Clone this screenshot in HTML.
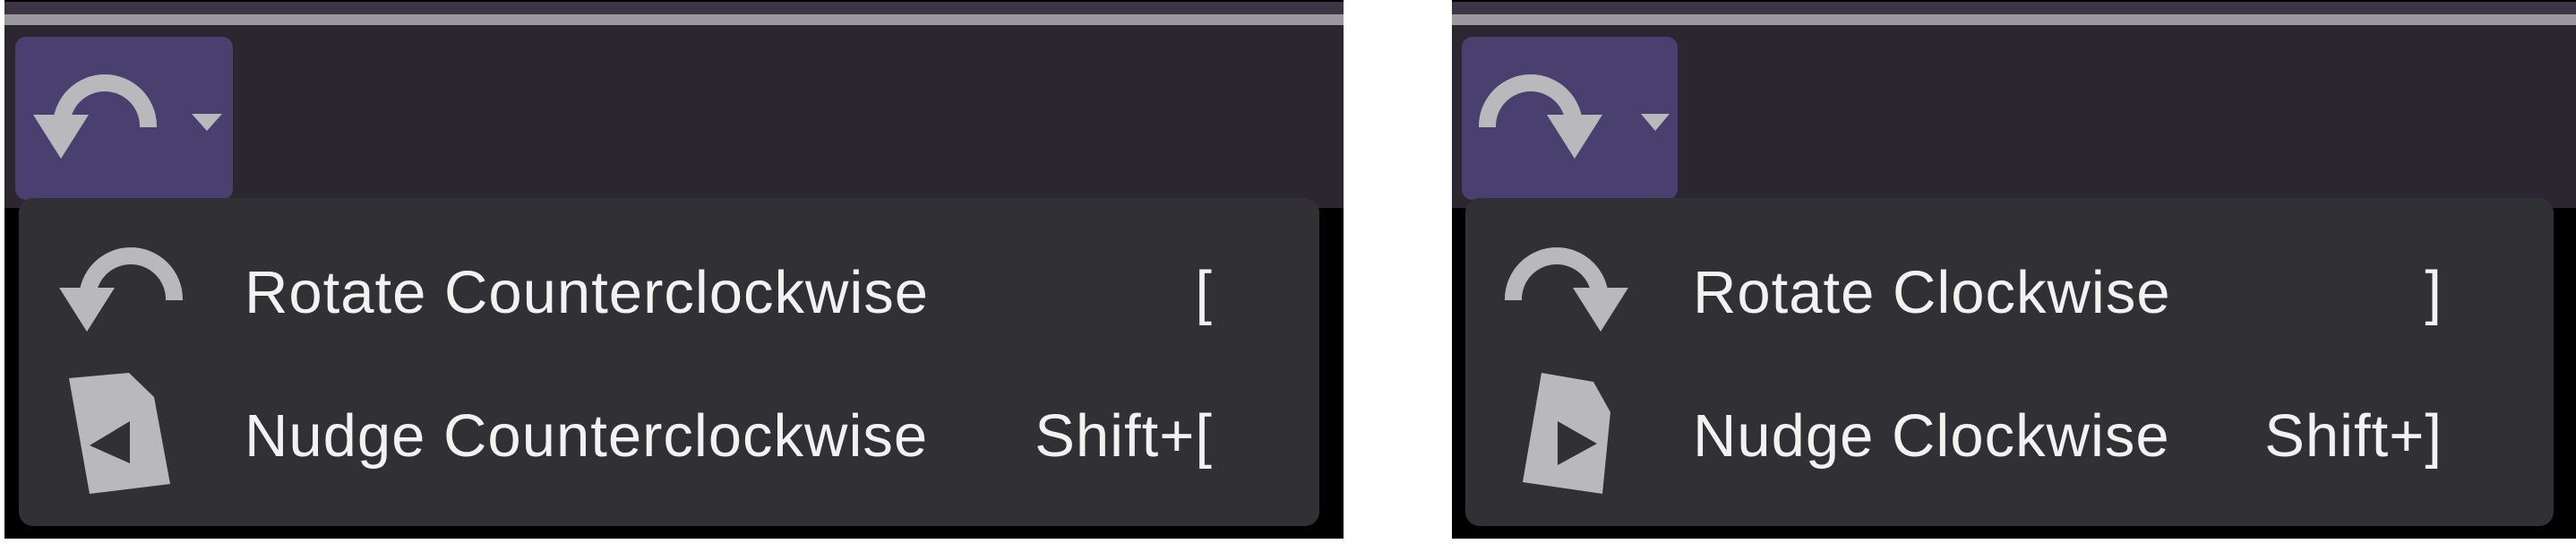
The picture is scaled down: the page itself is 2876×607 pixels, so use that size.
<!DOCTYPE html>
<html><head><meta charset="utf-8"><style>
*{margin:0;padding:0;box-sizing:border-box}
body{width:2876px;height:607px;background:#fff;position:relative;overflow:hidden;font-family:"Liberation Sans",sans-serif}
.abs{position:absolute}
.t{position:absolute;color:#f2f2f2;font-size:67px;line-height:67px;white-space:nowrap;letter-spacing:1px}
</style></head><body>
<!-- left panel -->
<div class="abs" style="left:5px;top:0;width:1495px;height:601px;background:#000"></div>
<div class="abs" style="left:5px;top:2px;width:1495px;height:14px;background:#3d3444"></div>
<div class="abs" style="left:5px;top:16px;width:1495px;height:12px;background:#9a9a9e"></div>
<div class="abs" style="left:5px;top:28px;width:1495px;height:204px;background:#2b2630"></div>
<div class="abs" style="left:17px;top:41px;width:243px;height:182px;background:#4a4070;border-radius:12px"></div>
<div class="abs" style="left:21px;top:221px;width:1452px;height:366px;background:#303035;border-radius:16px"></div>

<!-- right panel -->
<div class="abs" style="left:1621px;top:0;width:1255px;height:601px;background:#000"></div>
<div class="abs" style="left:1621px;top:2px;width:1255px;height:14px;background:#3d3444"></div>
<div class="abs" style="left:1621px;top:16px;width:1255px;height:12px;background:#9a9a9e"></div>
<div class="abs" style="left:1621px;top:28px;width:1255px;height:204px;background:#2b2630"></div>
<div class="abs" style="left:1632px;top:41px;width:241px;height:182px;background:#4a4070;border-radius:12px"></div>
<div class="abs" style="left:1636px;top:221px;width:1215px;height:366px;background:#303035;border-radius:16px"></div>

<svg class="abs" style="left:0;top:0" width="2876" height="607">
<defs>
<g id="ccw">
<path d="M127.5 59 V58 A48.5 48.5 0 0 0 30.5 58 V60" fill="none" stroke="#b9b9bd" stroke-width="19"/>
<polygon points="-1,45 61,45 30,94" fill="#b9b9bd"/>
</g>
<g id="cw" transform="translate(137,0) scale(-1,1)"><use href="#ccw"/></g>
</defs>
<use href="#ccw" transform="translate(38,83)"/>
<polygon points="214,127 248,127 231,146" fill="#b9b9bd"/>
<use href="#ccw" transform="translate(67,276)"/>
<polygon points="77,422 144,416 172,443 190,540 100,551" fill="#b9b9bd"/>
<polygon points="100,497 145,470 145,517" fill="#303035"/>

<use href="#cw" transform="translate(1651,83)"/>
<polygon points="1832,127 1864,127 1848,146" fill="#b9b9bd"/>
<use href="#cw" transform="translate(1680,276)"/>
<polygon points="1721,416 1779,426 1798,460 1789,551 1700,538" fill="#b9b9bd"/>
<polygon points="1739,470 1783,495 1739,519" fill="#303035"/>
</svg>

<div class="t" style="left:273px;top:293px">Rotate Counterclockwise</div>
<div class="t" style="right:1522px;top:293px">[</div>
<div class="t" style="left:273px;top:453px">Nudge Counterclockwise</div>
<div class="t" style="right:1522px;top:453px">Shift+[</div>

<div class="t" style="left:1890px;top:293px">Rotate Clockwise</div>
<div class="t" style="right:149px;top:293px">]</div>
<div class="t" style="left:1890px;top:453px">Nudge Clockwise</div>
<div class="t" style="right:149px;top:453px">Shift+]</div>
</body></html>
